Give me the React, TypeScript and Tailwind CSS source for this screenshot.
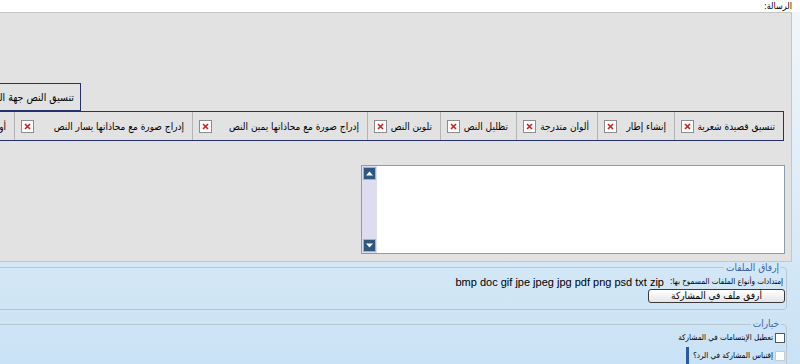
import React from 'react';

const toolbarItems = [
  { label: 'تنسيق قصيدة شعرية', width: 'w-[109px]' },
  { label: 'إنشاء إطار', width: 'w-[77px]' },
  { label: 'ألوان متدرجة', width: 'w-[81px]' },
  { label: 'تظليل النص', width: 'w-[76px]' },
  { label: 'تلوين النص', width: 'w-[73px]' },
  { label: 'إدراج صورة مع محاذاتها يمين النص', width: 'w-[175px]' },
  { label: 'إدراج صورة مع محاذاتها يسار النص', width: 'w-[178px]' },
  { label: 'أوامر الجداول', width: 'w-[120px]' },
];

// broken image placeholder (red x in a box)
const BrokenIcon: React.FC = () => (
  <span className="flex h-[13px] w-[13px] shrink-0 items-center justify-center border border-[#8d8d8d] bg-white">
    <svg width="7" height="7" viewBox="0 0 7 7">
      <path d="M1 1L6 6M6 1L1 6" stroke="#d21d1d" strokeWidth="1.6" />
    </svg>
  </span>
);

const ScrollButton: React.FC<{ up?: boolean }> = ({ up }) => (
  <span className="flex h-[13px] w-[13px] items-center justify-center border border-[#9fb3c6] bg-[#2f587f]">
    <svg width="7" height="5" viewBox="0 0 7 5">
      {up ? <path d="M0 4.5L3.5 0.5L7 4.5Z" fill="#fff" /> : <path d="M0 0.5L3.5 4.5L7 0.5Z" fill="#fff" />}
    </svg>
  </span>
);

const App: React.FC = () => {
  return (
    <div
      className="h-[364px] w-[800px] overflow-hidden bg-gradient-to-b from-white via-[#dcecf7] to-[#c9e2f5] text-black"
      style={{ fontFamily: '"DejaVu Sans Condensed", "DejaVu Sans", "Liberation Sans", sans-serif' }}
    >
      {/* label */}
      <div className="flex h-[12px] justify-end bg-white pr-[8px]">
        <span dir="rtl" className="text-[9px] leading-[12px]">الرسالة:</span>
      </div>

      {/* editor panel */}
      <div className="flex">
        <div className="h-[250px] w-[792px] overflow-hidden border-y border-r border-[#c6c6c6] bg-[#e2e2e2]">
          <div className="mt-[70px] flex">
            <div
              dir="rtl"
              className="h-[28px] w-[81px] overflow-hidden whitespace-nowrap border-y border-r border-[#26306e] pr-[6px] text-[10.5px] leading-[26px]"
            >
              تنسيق النص جهة اليسار
            </div>
          </div>

          <div
            dir="rtl"
            className="mr-[7px] flex h-[30px] w-[784px] overflow-hidden border-y border-r border-[#26306e]"
          >
            {toolbarItems.map((item) => (
              <div
                key={item.label}
                className={`${item.width} flex shrink-0 items-center justify-between whitespace-nowrap border-l border-[#b4b4b4] pl-[6px] pr-[8px] text-[10px]`}
              >
                <span>{item.label}</span>
                <BrokenIcon />
              </div>
            ))}
          </div>

          <div className="mt-[24px] flex justify-end pr-[6px]">
            <div className="flex h-[89px] w-[424px] border border-[#8c9cab] bg-white">
              <div className="flex w-[15px] flex-col justify-between bg-[#dddcf0] p-px">
                <ScrollButton up />
                <ScrollButton />
              </div>
            </div>
          </div>
        </div>
        <div className="flex-1 bg-gradient-to-b from-[#f1f6fa] to-[#d7e9f6]" />
      </div>

      {/* attachments + options */}
      <div dir="rtl" className="text-[10px]">
        <fieldset className="ml-[-10px] mr-[13px] h-[48px] rounded-[4px] border border-[#b7c6d1] pr-[3px]">
          <legend className="mr-[2px] px-[2px] text-[10px] leading-[11px] text-[#3d63ad]">إرفاق الملفات</legend>
          <div className="mt-[3px] flex items-center gap-[6px] whitespace-nowrap">
            <span className="text-[8px]">إمتدادات وأنواع الملفات المسموح بها:</span>
            <span dir="ltr" className="text-[11px] leading-[12px]" style={{ fontFamily: '"Liberation Sans", Arial, sans-serif' }}>
              bmp doc gif jpe jpeg jpg pdf png psd txt zip
            </span>
          </div>
          <div className="mt-[1px] flex">
            <button className="mr-[-2px] h-[14px] w-[137px] rounded-[3px] border border-[#3a3a3a] bg-gradient-to-b from-white to-[#e6e6e6] text-[10px] leading-[12px]">
              أرفق ملف في المشاركة
            </button>
          </div>
        </fieldset>

        <fieldset className="ml-[-10px] mr-[13px] mt-[9px] h-[60px] rounded-[4px] border border-[#b7c6d1] pr-[1px]">
          <legend className="mr-[4px] px-[2px] text-[10px] leading-[10px] text-[#3d63ad]">خيارات</legend>
          <div className="mt-[3px] flex items-center gap-[2px] whitespace-nowrap text-[8px]">
            <span className="h-[10px] w-[10px] border border-[#4e5a66] bg-white" />
            <span>تعطيل الإبتسامات في المشاركة</span>
          </div>
          <div className="mt-[3px] flex items-center gap-[2px] whitespace-nowrap text-[8px]">
            <span className="h-[10px] w-[10px] border border-[#c3ccd4] bg-white" />
            <span>إقتباس المشاركة في الرد؟</span>
            <span className="mr-[2px] h-[17px] w-[3px] bg-[#2d58a3]" />
          </div>
        </fieldset>
      </div>
    </div>
  );
};

export default App;
